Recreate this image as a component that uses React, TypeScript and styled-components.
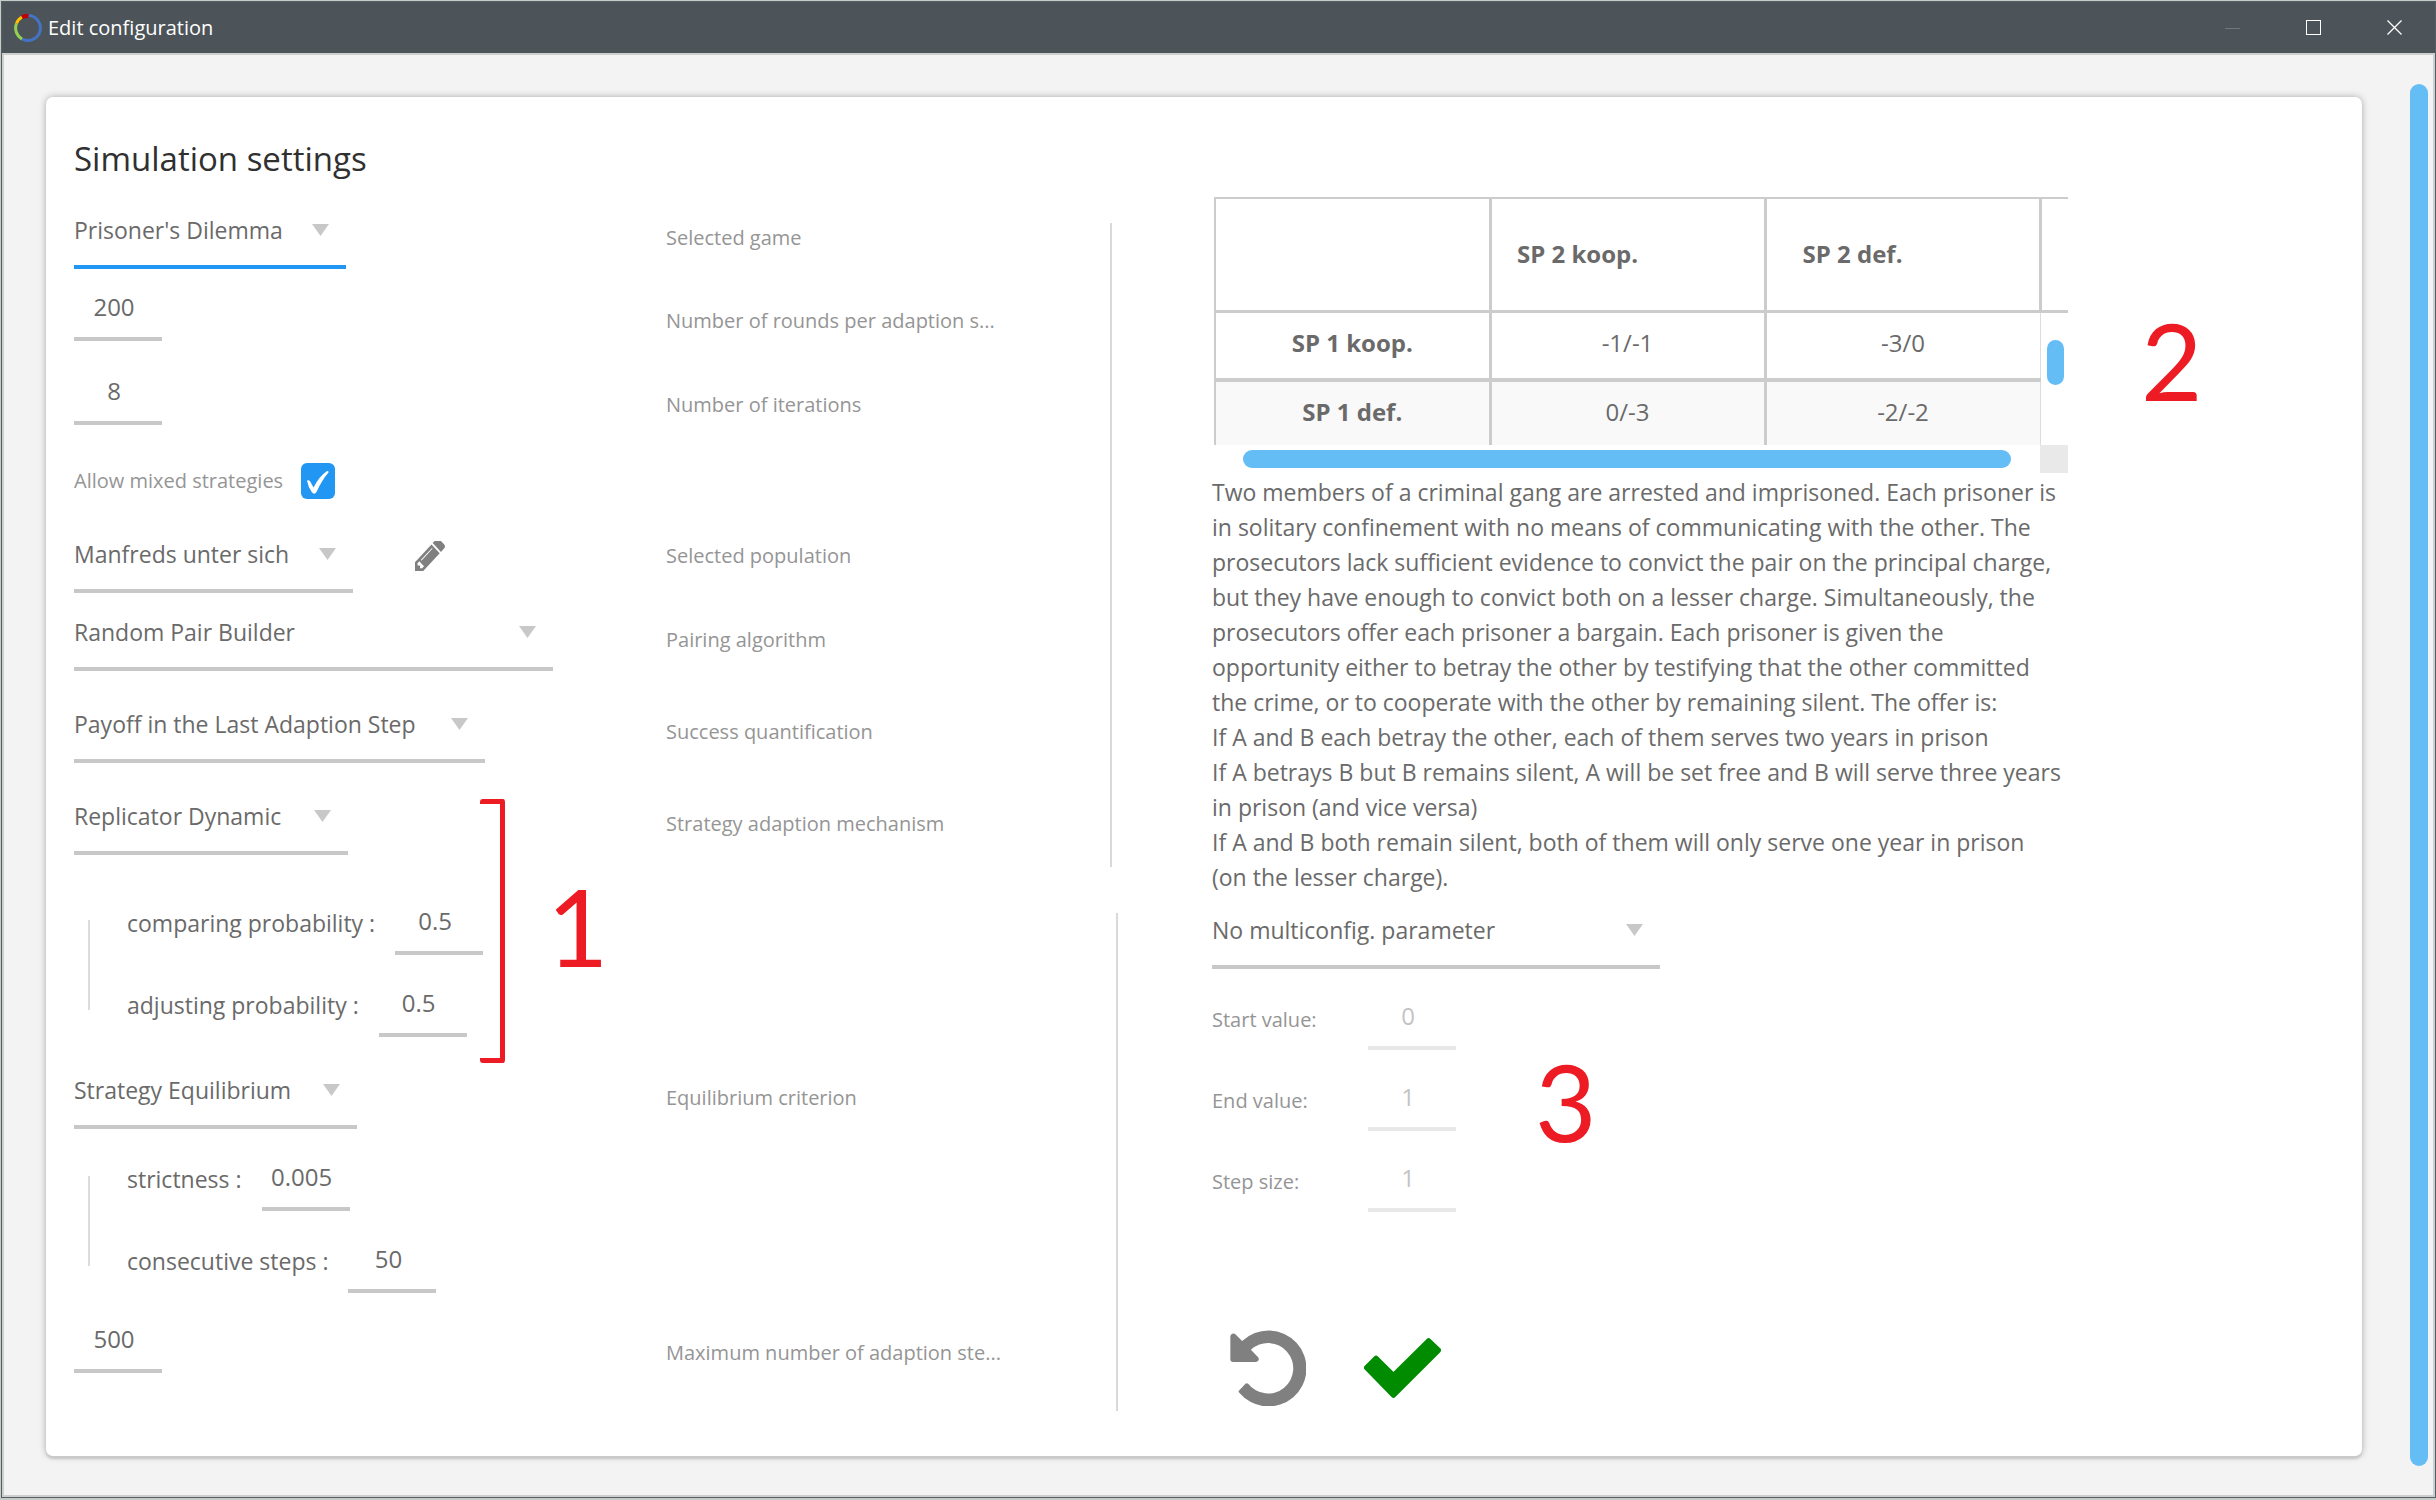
import React from "react";
import styled, { createGlobalStyle } from "styled-components";

const GlobalStyle = createGlobalStyle`
  *, *::before, *::after { box-sizing: border-box; }
  body {
    margin: 0;
    background: #c6cac8;
    font-family: "Open Sans", "Noto Sans", sans-serif;
    font-size: 23px;
    color: #6a6a6a;
  }
`;

const Shell = styled.div`
  min-height: 100vh;
  display: flex;
  padding: 1px 0 2px 1px;
`;

const Window = styled.div`
  flex: 1;
  min-width: 0;
  display: flex;
  flex-direction: column;
  border: 1px solid #566063;
`;

const TitleBar = styled.header`
  height: 51px;
  flex: none;
  display: flex;
  align-items: center;
  padding: 0 32px 0 12px;
  background: #4c5459;
`;

const WindowTitle = styled.span`
  flex: 1;
  margin-left: 6px;
  font-size: 20px;
  line-height: 28px;
  color: #fff;
`;

const WindowButtons = styled.div`
  display: flex;
  gap: 65px;
`;

const WindowButton = styled.button`
  display: block;
  width: 16px;
  height: 16px;
  padding: 0;
  border: 0;
  background: none;
  svg { display: block; }
`;

const Body = styled.div`
  flex: 1;
  display: flex;
  align-items: flex-start;
  border: 2px solid #cdcfcf;
  background: #f3f3f3;
  padding: 42px 5px 38px 42px;
`;

const Card = styled.main`
  flex: 1;
  min-width: 0;
  background: #fff;
  border-radius: 7px;
  padding: 28px 28px 24px;
  box-shadow: 0 3px 2px #cacaca, 0 0 7px rgba(0, 0, 0, 0.3);
`;

const PageScroll = styled.div`
  align-self: stretch;
  width: 18px;
  margin: -13px 0 -9px 48px;
  border-radius: 9px;
  background: #64bdf5;
`;

const Heading = styled.h1`
  margin: 0 0 4px;
  font-size: 33px;
  line-height: 68px;
  font-weight: 400;
  color: #303030;
`;

const Columns = styled.div`
  display: grid;
  grid-template-columns: minmax(0, 1036fr) 8px minmax(0, 1216fr);
`;

const Settings = styled.section`
  padding-top: 10px;
`;

const Row = styled.div<{ $gap?: number; $center?: boolean }>`
  display: grid;
  grid-template-columns: 4fr 3fr;
  align-items: ${(p) => (p.$center ? "center" : "end")};
  margin-top: ${(p) => p.$gap ?? 0}px;
`;

const Caption = styled.label<{ $lift?: number }>`
  padding-bottom: ${(p) => p.$lift ?? 0}px;
  font-size: 20px;
  line-height: 28px;
  color: #959595;
  white-space: nowrap;
`;

const SelectFrame = styled.span<{ $width: number; $active?: boolean }>`
  display: flex;
  align-items: center;
  width: ${(p) => p.$width}px;
  height: 62px;
  padding: 0 17px 12px 0;
  border-bottom: 4px solid ${(p) => (p.$active ? "#2196f3" : "#c8c8c8")};
`;

const SelectInput = styled.select`
  flex: 1;
  min-width: 0;
  height: 46px;
  padding: 0;
  border: 0;
  outline: 0;
  appearance: none;
  background: none;
  font: inherit;
  color: inherit;
`;

const NumberInput = styled.input`
  display: block;
  width: 88px;
  height: 62px;
  padding: 0 8px 4px 0;
  border: 0;
  border-bottom: 4px solid #c8c8c8;
  border-radius: 0;
  outline: 0;
  background: none;
  font: inherit;
  font-size: 24px;
  color: inherit;
  text-align: center;
  &:disabled { opacity: 0.4; }
`;

const Inline = styled.div<{ $gap: number }>`
  display: flex;
  align-items: center;
  gap: ${(p) => p.$gap}px;
`;

const CheckFrame = styled.span`
  position: relative;
  width: 34px;
  height: 36px;
  svg { position: absolute; inset: 0; pointer-events: none; }
`;

const Checkbox = styled.input`
  display: block;
  appearance: none;
  width: 34px;
  height: 36px;
  margin: 0;
  border-radius: 6px;
  background: #2196f3;
`;

const SelectLow = styled.div`
  align-self: flex-end;
`;

const IconButton = styled.button<{ $width: number; $height: number }>`
  display: flex;
  align-items: center;
  justify-content: center;
  width: ${(p) => p.$width}px;
  height: ${(p) => p.$height}px;
  padding: 0;
  border: 0;
  border-radius: 8px;
  background: none;
`;

const SubGroup = styled.div<{ $gap: number }>`
  position: relative;
  margin-top: ${(p) => p.$gap}px;
  display: flex;
  align-items: center;
  gap: 37px;
  padding-left: 14px;
`;

const SubRule = styled.div`
  width: 2px;
  height: 90px;
  background: #dcdcdc;
`;

const SubFields = styled.div`
  display: grid;
  gap: 20px;
`;

const SubField = styled.label`
  display: flex;
  align-items: flex-end;
  gap: 20px;
`;

const SubLabel = styled.span`
  padding-bottom: 15px;
  line-height: 34px;
`;

const Bracket = styled.div`
  position: absolute;
  left: 406px;
  top: -94px;
  width: 25px;
  height: 264px;
  border: 5px solid #ed1c24;
  border-left: 0;
  border-radius: 3px;
`;

const Mark = styled.span<{ $left: number; $top: number }>`
  position: absolute;
  left: ${(p) => p.$left}px;
  top: ${(p) => p.$top}px;
  font-family: Lato, sans-serif;
  font-size: 106px;
  line-height: 106px;
  color: #ed1c24;
`;

const Dividers = styled.div`
  display: flex;
  flex-direction: column;
  gap: 46px;
  padding: 26px 0 21px;
`;

const Divider = styled.div<{ $grow: number; $end?: boolean }>`
  flex: ${(p) => p.$grow} 0 0;
  width: 2px;
  align-self: ${(p) => (p.$end ? "flex-end" : "flex-start")};
  background: #d9d9d9;
`;

const Details = styled.section`
  position: relative;
  padding-left: 94px;
`;

const Payoff = styled.div`
  width: 856px;
  padding-left: 2px;
`;

const PayoffTable = styled.table`
  width: 100%;
  table-layout: fixed;
  border-collapse: collapse;
  font-size: 24px;
  line-height: 34px;
  text-align: center;
`;

const HeadCell = styled.th`
  height: 113px;
  padding: 0 100px 0 0;
  border: 3px solid #cccccc;
  border-top-width: 2px;
  &:first-child { border-left-width: 2px; }
  &:last-child { padding: 0; border-right: 0; }
`;

const RowHead = styled.th<{ $shade?: boolean }>`
  height: ${(p) => (p.$shade ? 65 : 69)}px;
  padding: 0 0 4px;
  border-left: 2px solid #cccccc;
  border-right: 3px solid #cccccc;
  border-bottom: ${(p) => (p.$shade ? "0" : "4px solid #cccccc")};
  background: ${(p) => (p.$shade ? "#f9f9f9" : "#fff")};
`;

const Cell = styled.td<{ $shade?: boolean; $last?: boolean }>`
  padding: 0 0 4px;
  border-right: ${(p) => (p.$last ? "1px solid #dddddd" : "3px solid #cccccc")};
  border-bottom: ${(p) => (p.$shade ? "0" : "4px solid #cccccc")};
  background: ${(p) => (p.$shade ? "#f9f9f9" : "#fff")};
`;

const ScrollCell = styled.td`
  padding: 27px 4px 0 6px;
  vertical-align: top;
`;

const TableScrollV = styled.div`
  height: 45px;
  border-radius: 9px;
  background: #64bdf5;
`;

const TableScrollH = styled.div`
  display: flex;
  align-items: center;
  gap: 29px;
  padding-left: 29px;
`;

const TableScrollThumb = styled.div`
  flex: 1;
  height: 18px;
  border-radius: 9px;
  background: #64bdf5;
`;

const ScrollCorner = styled.div`
  width: 28px;
  height: 28px;
  background: #e9e9e9;
`;

const Story = styled.p`
  margin: 2px 0 12px;
  line-height: 35px;
  white-space: pre;
`;

const Values = styled.div`
  display: grid;
  gap: 19px;
  margin-top: 19px;
`;

const ValueRow = styled.div`
  display: grid;
  grid-template-columns: 156px 88px;
  align-items: end;
`;

const Actions = styled.div`
  display: flex;
  gap: 18px;
  margin-top: 91px;
`;

function Select({ id, value, width, active, label }: {
  id: string;
  value: string;
  width: number;
  active?: boolean;
  label?: string;
}) {
  return (
    <SelectFrame $width={width} $active={active}>
      <SelectInput id={id} aria-label={label} defaultValue={value}>
        <option>{value}</option>
      </SelectInput>
      <svg width="17" height="12" viewBox="0 0 17 12" aria-hidden="true">
        <path d="M0 0H17L8.500 12Z" fill="#c8c8c8" />
      </svg>
    </SelectFrame>
  );
}

function SelectRow({ id, value, width, caption, gap, active }: {
  id: string;
  value: string;
  width: number;
  caption: string;
  gap?: number;
  active?: boolean;
}) {
  return (
    <Row $gap={gap}>
      <Select id={id} value={value} width={width} active={active} />
      <Caption htmlFor={id} $lift={17}>{caption}</Caption>
    </Row>
  );
}

function NumberRow({ id, value, caption, gap }: {
  id: string;
  value: string;
  caption: string;
  gap: number;
}) {
  return (
    <Row $gap={gap}>
      <NumberInput id={id} defaultValue={value} />
      <Caption htmlFor={id} $lift={6}>{caption}</Caption>
    </Row>
  );
}

function SubRow({ label, value }: { label: string; value: string }) {
  return (
    <SubField>
      <SubLabel>{label}</SubLabel>
      <NumberInput defaultValue={value} />
    </SubField>
  );
}

const story = [
  "Two members of a criminal gang are arrested and imprisoned. Each prisoner is",
  "in solitary confinement with no means of communicating with the other. The",
  "prosecutors lack sufficient evidence to convict the pair on the principal charge,",
  "but they have enough to convict both on a lesser charge. Simultaneously, the",
  "prosecutors offer each prisoner a bargain. Each prisoner is given the",
  "opportunity either to betray the other by testifying that the other committed",
  "the crime, or to cooperate with the other by remaining silent. The offer is:",
  "If A and B each betray the other, each of them serves two years in prison",
  "If A betrays B but B remains silent, A will be set free and B will serve three years",
  "in prison (and vice versa)",
  "If A and B both remain silent, both of them will only serve one year in prison",
  "(on the lesser charge).",
].join("\n");

const ranges = [
  { id: "start", label: "Start value:", value: "0" },
  { id: "end", label: "End value:", value: "1" },
  { id: "step", label: "Step size:", value: "1" },
];

export default function App() {
  return (
    <Shell>
      <GlobalStyle />
      <Window>
        <TitleBar>
          <svg width="28" height="28" viewBox="0 0 28 28" fill="none" strokeWidth="3" aria-hidden="true">
            <path d="M14 1.500A12.500 12.500 0 1 1 8 25" stroke="#4472c4" />
            <path d="M8 25A12.500 12.500 0 0 1 2.500 9.500" stroke="#92d050" />
            <path d="M2.500 9.500A12.500 12.500 0 0 1 8 3" stroke="#ffc000" />
            <path d="M8 3A12.500 12.500 0 0 1 14.500 2" stroke="#c00000" strokeWidth="4" />
          </svg>
          <WindowTitle>Edit configuration</WindowTitle>
          <WindowButtons>
            <WindowButton aria-label="Minimize" disabled>
              <svg width="16" height="16" stroke="#6f7877"><path d="M0 8.500H15" /></svg>
            </WindowButton>
            <WindowButton aria-label="Maximize">
              <svg width="16" height="16" fill="none" stroke="#fff"><rect x="0.500" y="0.500" width="14" height="14" /></svg>
            </WindowButton>
            <WindowButton aria-label="Close">
              <svg width="16" height="16" stroke="#fff" strokeWidth="1.300"><path d="M0.500 0.500L14.500 14.500M14.500 0.500L0.500 14.500" /></svg>
            </WindowButton>
          </WindowButtons>
        </TitleBar>
        <Body>
          <Card>
            <Heading>Simulation settings</Heading>
            <Columns>
              <Settings>
                <SelectRow id="game" value="Prisoner's Dilemma" width={272} caption="Selected game" active />
                <NumberRow id="rounds" value="200" caption="Number of rounds per adaption s..." gap={10} />
                <NumberRow id="iterations" value="8" caption="Number of iterations" gap={22} />
                <Row $gap={38}>
                  <Inline $gap={18}>
                    <Caption htmlFor="mixed">Allow mixed strategies</Caption>
                    <CheckFrame>
                      <Checkbox id="mixed" type="checkbox" defaultChecked />
                      <svg width="34" height="36" viewBox="0 0 34 36" aria-hidden="true">
                        <path d="M6 17.500Q8.500 16.500 9.500 19L12.500 24.500Q18 13.500 26 8Q28 7.500 27.500 9.500Q21 17 15.500 29Q13.500 32 11 29.500Q7 24 6 17.500Z" fill="#fff" />
                      </svg>
                    </CheckFrame>
                  </Inline>
                </Row>
                <Row $gap={20} $center>
                  <Inline $gap={44}>
                    <SelectLow>
                      <Select id="population" value="Manfreds unter sich" width={279} />
                    </SelectLow>
                    <IconButton $width={66} $height={74} aria-label="Edit population">
                      <svg width="30" height="30" viewBox="128 256 1516 1408" preserveAspectRatio="none" fill="#808080" aria-hidden="true">
                        <path d="M491 1536l91-91-235-235-91 91v107h128v128h107zm523-928q0-22-22-22-10 0-17 7l-542 542q-7 7-7 17 0 22 22 22 10 0 17-7l542-542q7-7 7-17zm-54-192l416 416-832 832h-416v-416zm683 96q0 53-37 90l-166 166-416-416 166-165q36-38 90-38 53 0 91 38l235 234q37 39 37 91z" />
                      </svg>
                    </IconButton>
                  </Inline>
                  <Caption htmlFor="population">Selected population</Caption>
                </Row>
                <SelectRow id="pairing" value="Random Pair Builder" width={479} caption="Pairing algorithm" gap={16} />
                <SelectRow id="success" value="Payoff in the Last Adaption Step" width={411} caption="Success quantification" gap={30} />
                <SelectRow id="adaption" value="Replicator Dynamic" width={274} caption="Strategy adaption mechanism" gap={30} />
                <SubGroup $gap={38}>
                  <SubRule />
                  <SubFields>
                    <SubRow label="comparing probability :" value="0.5" />
                    <SubRow label="adjusting probability :" value="0.5" />
                  </SubFields>
                  <Bracket />
                  <Mark $left={473} $top={-20}>1</Mark>
                </SubGroup>
                <SelectRow id="equilibrium" value="Strategy Equilibrium" width={283} caption="Equilibrium criterion" gap={30} />
                <SubGroup $gap={20}>
                  <SubRule />
                  <SubFields>
                    <SubRow label="strictness :" value="0.005" />
                    <SubRow label="consecutive steps :" value="50" />
                  </SubFields>
                </SubGroup>
                <NumberRow id="maximum" value="500" caption="Maximum number of adaption ste..." gap={18} />
              </Settings>
              <Dividers>
                <Divider $grow={644} />
                <Divider $grow={498} $end />
              </Dividers>
              <Details>
                <Payoff>
                  <PayoffTable>
                    <colgroup>
                      <col />
                      <col />
                      <col />
                      <col style={{ width: 28 }} />
                    </colgroup>
                    <thead>
                      <tr>
                        <HeadCell />
                        <HeadCell scope="col">SP 2 koop.</HeadCell>
                        <HeadCell scope="col">SP 2 def.</HeadCell>
                        <HeadCell />
                      </tr>
                    </thead>
                    <tbody>
                      <tr>
                        <RowHead scope="row">SP 1 koop.</RowHead>
                        <Cell>-1/-1</Cell>
                        <Cell $last>-3/0</Cell>
                        <ScrollCell rowSpan={2}>
                          <TableScrollV />
                        </ScrollCell>
                      </tr>
                      <tr>
                        <RowHead scope="row" $shade>SP 1 def.</RowHead>
                        <Cell $shade>0/-3</Cell>
                        <Cell $shade $last>-2/-2</Cell>
                      </tr>
                    </tbody>
                  </PayoffTable>
                  <TableScrollH>
                    <TableScrollThumb />
                    <ScrollCorner />
                  </TableScrollH>
                </Payoff>
                <Story>{story}</Story>
                <Select id="multi" value="No multiconfig. parameter" width={448} label="Multi configuration parameter" />
                <Values>
                  {ranges.map((r) => (
                    <ValueRow key={r.id}>
                      <Caption htmlFor={r.id} $lift={16}>{r.label}</Caption>
                      <NumberInput id={r.id} defaultValue={r.value} disabled />
                    </ValueRow>
                  ))}
                </Values>
                <Actions>
                  <IconButton $width={111} $height={129} aria-label="Reset">
                    <svg width="76" height="76" viewBox="0 0 226 226" fill="#808080" aria-hidden="true">
                      <path d="M36 33A113 113 0 1 1 27 186Q24 183 27 180L46 160Q50 156 54 160A75 75 0 1 0 62 59L83 80Q87 85 85 90Q82 95 76 95H9Q1 95 1 87V20Q1 13 7 11Q12 9 16 13Z" />
                    </svg>
                  </IconButton>
                  <IconButton $width={123} $height={129} aria-label="Apply">
                    <svg width="77" height="60" viewBox="0 0 230 178" aria-hidden="true">
                      <path d="M8 88L36 60L88 112L193 8L222 36L88 170Z" fill="#008b00" stroke="#008b00" strokeWidth="16" strokeLinejoin="round" />
                    </svg>
                  </IconButton>
                </Actions>
                <Mark $left={1023} $top={110}>2</Mark>
                <Mark $left={417} $top={851}>3</Mark>
              </Details>
            </Columns>
          </Card>
          <PageScroll />
        </Body>
      </Window>
    </Shell>
  );
}
